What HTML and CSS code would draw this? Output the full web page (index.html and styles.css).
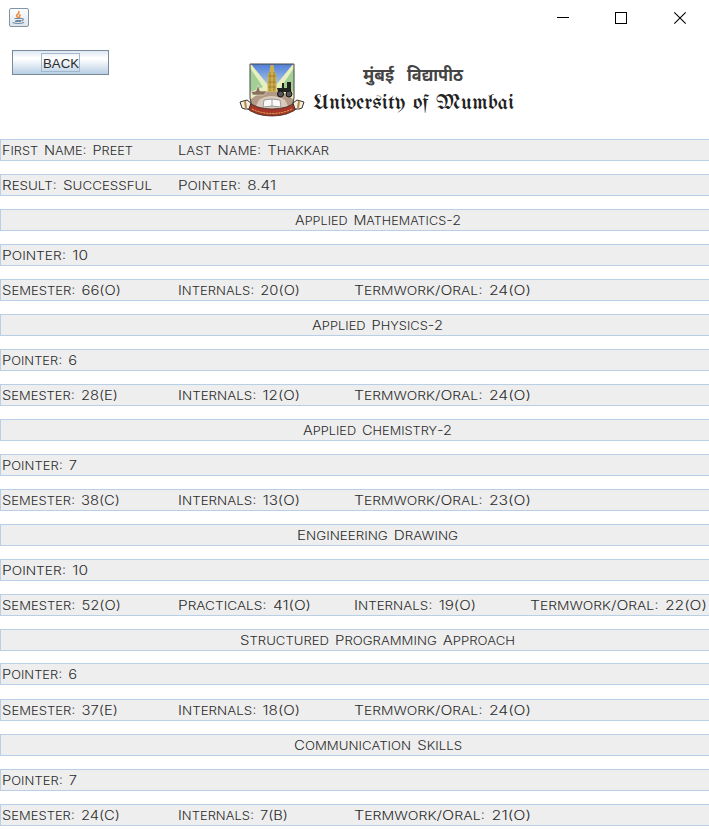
FILE: index.html
```html
<!DOCTYPE html>
<html lang="en">
<head>
<meta charset="utf-8">
<title>Result</title>
<link rel="stylesheet" href="styles.css">
</head>
<body>
<header class="titlebar">
  <svg class="java" width="20" height="20" viewBox="0 0 20 20">
    <defs><linearGradient id="jg" x1="0" y1="0" x2="0" y2="1"><stop offset="0" stop-color="#fff"/><stop offset="1" stop-color="#dce3ea"/></linearGradient></defs>
    <rect x=".5" y=".5" width="19" height="18" rx="1.500" fill="url(#jg)" stroke="#8295a6"/>
    <path d="M9.500 10C6.500 8 7.500 7 9.500 5.500Q10.500 4.500 9.500 3M11 10Q9.500 8.500 11.500 6.500" fill="none" stroke="#ee8d43" stroke-width="1.600"/>
    <path d="M5.500 10.500h8M6.500 12.500h6M13 10.500q2.500 0 0 2.500M3.500 14.500q5.500 2 11.500 0M6 13.500h6" fill="none" stroke="#6c8ba4" stroke-width="1.200"/>
  </svg>
  <div class="controls">
    <svg width="12" height="12"><path d="M1 5.500h12" stroke="#000"/></svg>
    <svg width="12" height="12"><rect x=".5" y=".5" width="11" height="11" fill="none" stroke="#000"/></svg>
    <svg width="12" height="12"><path d="M.3.300l11.400 11.400M11.700.300L.3 11.700" stroke="#000" stroke-width="1.100"/></svg>
  </div>
</header>
<section class="banner">
  <button class="back"><span><svg width="37" height="17"><text x="1" y="13.500" textLength="36" lengthAdjust="spacingAndGlyphs">BACK</text></svg></span></button>
  <svg class="logo" width="280" height="60" viewBox="0 0 280 60">
    <defs>
      <clipPath id="shield"><path d="M13 5H57V39Q57 53 35 55Q13 53 13 39Z"/></clipPath>
      <linearGradient id="sky" x1="0" y1="0" x2="0" y2="1"><stop offset="0" stop-color="#4f7fd6"/><stop offset="1" stop-color="#c3d8ee"/></linearGradient>
    </defs>
    <g transform="translate(-1 -1)">
      <g clip-path="url(#shield)">
        <path fill="#e6efbd" d="M12 4h46v52H12z"/>
        <path fill="url(#sky)" d="M14 5h42L35 31z"/>
        <path fill="#a3cf96" d="M13 9v24l13-5zM57 9v24l-13-5z"/>
        <path fill="#b29a86" d="M12 42q10-10 23-10t23 10v14H12z"/>
        <path fill="#d9cabb" d="M22 41q12-8 26 0l6 12H16z"/>
        <path fill="#cfae4d" d="M30.500 33V16l2-3 1-7h3l1 7 2 3v17z"/>
        <path stroke="#94762f" stroke-width=".8" d="M33 13v19M37 13v19M31 17h8M31 23h8M31 28h8" fill="none"/>
      </g>
      <path d="M13 5H57V39Q57 53 35 55Q13 53 13 39Z" fill="none" stroke="#444"/>
      <path d="M14 33l5-1 2-6 2 6h7l-3 4H16z" fill="#86705a" stroke="#f0e6d6" stroke-width=".6"/>
      <path d="M40 29h5v-5h2v5h3v-6h4v10H41z" fill="#222"/>
      <circle cx="43.500" cy="35" r="3" fill="#555" stroke="#111"/><circle cx="52" cy="35" r="3" fill="#555" stroke="#111"/>
      <path d="M27 41l8-1 8 1 1 7-9-1-9 1zM35 40v7" fill="#fafafa" stroke="#888" stroke-width=".8"/>
      <path d="M10 42q9 8 25 8t25-8l2 6q-10 9-27 9T8 48z" fill="#a8352a" stroke="#3b2920" stroke-width=".8"/>
      <path d="M3 43l7-2 4 3-2 6-4 0-3-1z" fill="#f2eee4" stroke="#333"/>
      <path d="M67 43l-7-2-4 3 2 6 4 0 3-1z" fill="#f2eee4" stroke="#333"/>
      <path d="M8 42l1 7M62 42l-1 7" stroke="#b48a3c" stroke-width="2"/>
      <path d="M15 50q9 4.500 20 4.500t20-4.500" fill="none" stroke="#e7bd50" stroke-dasharray="2 1"/>
    </g>
    <text class="hindi" x="125" y="21" textLength="31" lengthAdjust="spacingAndGlyphs">मुंबई</text>
    <text class="hindi" x="169" y="21" textLength="56" lengthAdjust="spacingAndGlyphs">विद्यापीठ</text>
    <text class="gothic" x="75" y="49" textLength="201" lengthAdjust="spacingAndGlyphs">University of Mumbai</text>
  </svg>
</section>
<main class="rows">
  <div class="row">
    <svg><text y="14.500" textLength="131" lengthAdjust="spacingAndGlyphs">F<tspan>irst</tspan> N<tspan>ame</tspan>: P<tspan>reet</tspan></text></svg>
    <svg><text y="14.500" textLength="151" lengthAdjust="spacingAndGlyphs">L<tspan>ast</tspan> N<tspan>ame</tspan>: T<tspan>hakkar</tspan></text></svg>
  </div>
  <div class="row">
    <svg><text y="14.500" textLength="150" lengthAdjust="spacingAndGlyphs">R<tspan>esult</tspan>: S<tspan>uccessful</tspan></text></svg>
    <svg><text y="14.500" textLength="98" lengthAdjust="spacingAndGlyphs">P<tspan>ointer</tspan>: 8.41</text></svg>
  </div>
  <h2 class="row subject"><svg width="166"><text y="14.500" textLength="166" lengthAdjust="spacingAndGlyphs">A<tspan>pplied</tspan> M<tspan>athematics</tspan>-2</text></svg></h2>
  <div class="row"><svg><text y="14.500" textLength="86" lengthAdjust="spacingAndGlyphs">P<tspan>ointer</tspan>: 10</text></svg></div>
  <div class="row">
    <svg><text y="14.500" textLength="119" lengthAdjust="spacingAndGlyphs">S<tspan>emester</tspan>: 66(O)</text></svg>
    <svg><text y="14.500" textLength="122" lengthAdjust="spacingAndGlyphs">I<tspan>nternals</tspan>: 20(O)</text></svg>
    <svg><text y="14.500" textLength="177" lengthAdjust="spacingAndGlyphs">T<tspan>ermwork</tspan>/O<tspan>ral</tspan>: 24(O)</text></svg>
  </div>
  <h2 class="row subject"><svg width="131"><text y="14.500" textLength="131" lengthAdjust="spacingAndGlyphs">A<tspan>pplied</tspan> P<tspan>hysics</tspan>-2</text></svg></h2>
  <div class="row"><svg><text y="14.500" textLength="75" lengthAdjust="spacingAndGlyphs">P<tspan>ointer</tspan>: 6</text></svg></div>
  <div class="row">
    <svg><text y="14.500" textLength="116" lengthAdjust="spacingAndGlyphs">S<tspan>emester</tspan>: 28(E)</text></svg>
    <svg><text y="14.500" textLength="122" lengthAdjust="spacingAndGlyphs">I<tspan>nternals</tspan>: 12(O)</text></svg>
    <svg><text y="14.500" textLength="177" lengthAdjust="spacingAndGlyphs">T<tspan>ermwork</tspan>/O<tspan>ral</tspan>: 24(O)</text></svg>
  </div>
  <h2 class="row subject"><svg width="149"><text y="14.500" textLength="149" lengthAdjust="spacingAndGlyphs">A<tspan>pplied</tspan> C<tspan>hemistry</tspan>-2</text></svg></h2>
  <div class="row"><svg><text y="14.500" textLength="75" lengthAdjust="spacingAndGlyphs">P<tspan>ointer</tspan>: 7</text></svg></div>
  <div class="row">
    <svg><text y="14.500" textLength="118" lengthAdjust="spacingAndGlyphs">S<tspan>emester</tspan>: 38(C)</text></svg>
    <svg><text y="14.500" textLength="122" lengthAdjust="spacingAndGlyphs">I<tspan>nternals</tspan>: 13(O)</text></svg>
    <svg><text y="14.500" textLength="177" lengthAdjust="spacingAndGlyphs">T<tspan>ermwork</tspan>/O<tspan>ral</tspan>: 23(O)</text></svg>
  </div>
  <h2 class="row subject"><svg width="161"><text y="14.500" textLength="161" lengthAdjust="spacingAndGlyphs">E<tspan>ngineering</tspan> D<tspan>rawing</tspan></text></svg></h2>
  <div class="row"><svg><text y="14.500" textLength="86" lengthAdjust="spacingAndGlyphs">P<tspan>ointer</tspan>: 10</text></svg></div>
  <div class="row">
    <svg><text y="14.500" textLength="119" lengthAdjust="spacingAndGlyphs">S<tspan>emester</tspan>: 52(O)</text></svg>
    <svg><text y="14.500" textLength="133" lengthAdjust="spacingAndGlyphs">P<tspan>racticals</tspan>: 41(O)</text></svg>
    <svg><text y="14.500" textLength="122" lengthAdjust="spacingAndGlyphs">I<tspan>nternals</tspan>: 19(O)</text></svg>
    <svg><text y="14.500" textLength="177" lengthAdjust="spacingAndGlyphs">T<tspan>ermwork</tspan>/O<tspan>ral</tspan>: 22(O)</text></svg>
  </div>
  <h2 class="row subject"><svg width="275"><text y="14.500" textLength="275" lengthAdjust="spacingAndGlyphs">S<tspan>tructured</tspan> P<tspan>rogramming</tspan> A<tspan>pproach</tspan></text></svg></h2>
  <div class="row raised"><svg><text y="14.500" textLength="75" lengthAdjust="spacingAndGlyphs">P<tspan>ointer</tspan>: 6</text></svg></div>
  <div class="row">
    <svg><text y="14.500" textLength="116" lengthAdjust="spacingAndGlyphs">S<tspan>emester</tspan>: 37(E)</text></svg>
    <svg><text y="14.500" textLength="122" lengthAdjust="spacingAndGlyphs">I<tspan>nternals</tspan>: 18(O)</text></svg>
    <svg><text y="14.500" textLength="177" lengthAdjust="spacingAndGlyphs">T<tspan>ermwork</tspan>/O<tspan>ral</tspan>: 24(O)</text></svg>
  </div>
  <h2 class="row subject"><svg width="168"><text y="14.500" textLength="168" lengthAdjust="spacingAndGlyphs">C<tspan>ommunication</tspan> S<tspan>kills</tspan></text></svg></h2>
  <div class="row"><svg><text y="14.500" textLength="75" lengthAdjust="spacingAndGlyphs">P<tspan>ointer</tspan>: 7</text></svg></div>
  <div class="row">
    <svg><text y="14.500" textLength="118" lengthAdjust="spacingAndGlyphs">S<tspan>emester</tspan>: 24(C)</text></svg>
    <svg><text y="14.500" textLength="110" lengthAdjust="spacingAndGlyphs">I<tspan>nternals</tspan>: 7(B)</text></svg>
    <svg><text y="14.500" textLength="177" lengthAdjust="spacingAndGlyphs">T<tspan>ermwork</tspan>/O<tspan>ral</tspan>: 21(O)</text></svg>
  </div>
</main>
</body>
</html>
```
FILE: styles.css
```css
* { box-sizing: border-box; }
body {
  margin: 0;
  height: 829px;
  overflow: hidden;
  background: #fff;
  font-family: Inter, "Liberation Sans", sans-serif;
}
svg { display: block; overflow: visible; }
text { fill: #2b2b2b; font-size: 12.5px; font-weight: 300; word-spacing: 1.5px; }
.titlebar {
  height: 36px;
  padding: 8px 23px 0 9px;
  display: flex;
  justify-content: space-between;
}
.controls { display: flex; gap: 47px; padding-top: 4px; }
.banner {
  height: 103px;
  display: flex;
  align-items: flex-start;
  padding: 14px 0 0 12px;
}
.back {
  width: 97px;
  height: 25px;
  padding: 0;
  display: flex;
  align-items: center;
  justify-content: center;
  border: 1px solid #7a8a99;
  border-radius: 0;
  background: linear-gradient(#dde8f3, #fff 30%, #fff 35%, #b8cfe5);
}
.back span { border: 1px solid #a3b8cc; }
.logo { margin: 10px 0 0 129px; }
.hindi { font: bold 17px "Noto Sans Devanagari", "Noto Sans", sans-serif; fill: #444; }
.gothic { font: 21px "UnifrakturMaguntia", "Old English Text MT", "Liberation Serif", serif; fill: #222; }
.rows { display: grid; grid-auto-rows: 22px; row-gap: 13px; overflow: hidden; }
.row {
  margin: 0;
  display: grid;
  grid-template-columns: repeat(4, 176px);
  padding-left: 1px;
  width: 720px;
  background: #eee;
  border: 1px solid #b8cfe5;
}
.row svg { height: 20px; }
.row tspan { font-size: 11px; text-transform: uppercase; }
.subject { display: flex; justify-content: center; width: 755px; padding: 0; }
.raised { margin: -1px 0 1px; }
```
